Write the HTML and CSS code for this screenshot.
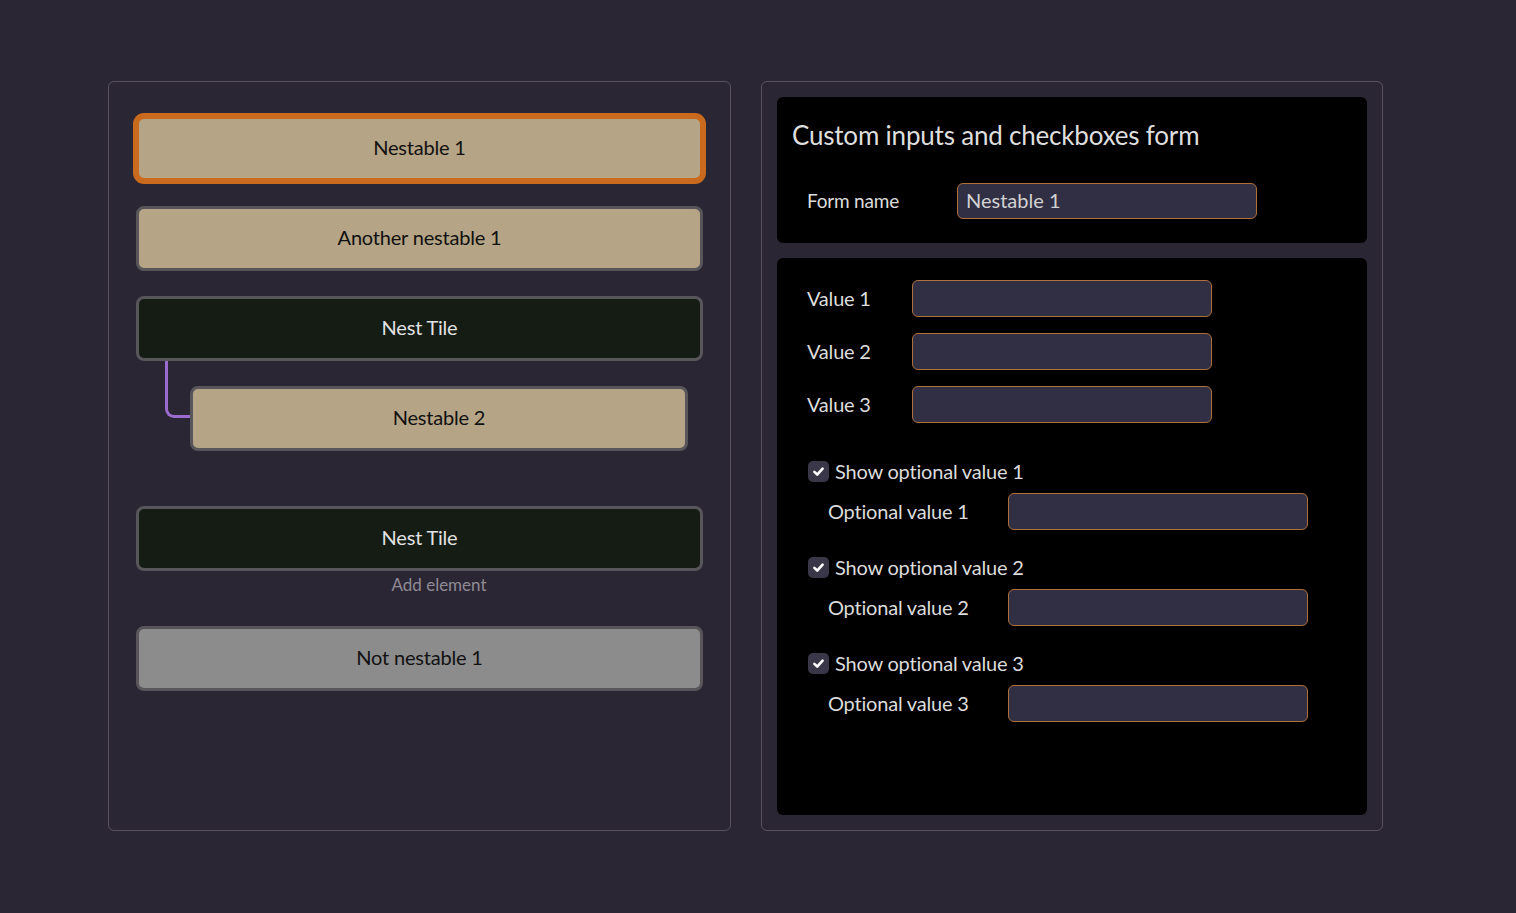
FILE: index.html
```html
<!DOCTYPE html>
<html lang="en">
<head>
<meta charset="utf-8">
<title>Nestable form</title>
<link rel="stylesheet" href="styles.css">
</head>
<body>
<main class="layout">
  <section class="panel list-panel">
    <div class="tile tan selected">Nestable 1</div>
    <div class="tile tan">Another nestable 1</div>
    <div class="nest">
      <div class="tile dark">Nest Tile</div>
      <div class="children">
        <div class="child">
          <span class="connector"></span>
          <div class="tile tan">Nestable 2</div>
        </div>
        <div class="add add-hidden">Add element</div>
      </div>
    </div>
    <div class="nest">
      <div class="tile dark">Nest Tile</div>
      <div class="children">
        <div class="add">Add element</div>
      </div>
    </div>
    <div class="tile grey">Not nestable 1</div>
  </section>

  <section class="panel form-panel">
    <div class="card head-card">
      <h1 class="title">Custom inputs and checkboxes form</h1>
      <div class="row name-row">
        <label class="lbl name-lbl">Form name</label>
        <div class="input">Nestable 1</div>
      </div>
    </div>
    <div class="card body-card">
      <div class="values">
        <div class="row"><label class="lbl val-lbl">Value 1</label><div class="input"></div></div>
        <div class="row"><label class="lbl val-lbl">Value 2</label><div class="input"></div></div>
        <div class="row"><label class="lbl val-lbl">Value 3</label><div class="input"></div></div>
      </div>
      <div class="opts">
        <div class="opt">
          <div class="check-row"><span class="box"><svg viewBox="0 0 12 12" width="13" height="13"><path d="M2.2 6.3 L4.8 8.8 L9.8 3.4" fill="none" stroke="#fff" stroke-width="2.4" stroke-linecap="round" stroke-linejoin="round"/></svg></span><span class="lbl">Show optional value 1</span></div>
          <div class="row opt-row"><label class="lbl opt-lbl">Optional value 1</label><div class="input"></div></div>
        </div>
        <div class="opt">
          <div class="check-row"><span class="box"><svg viewBox="0 0 12 12" width="13" height="13"><path d="M2.2 6.3 L4.8 8.8 L9.8 3.4" fill="none" stroke="#fff" stroke-width="2.4" stroke-linecap="round" stroke-linejoin="round"/></svg></span><span class="lbl">Show optional value 2</span></div>
          <div class="row opt-row"><label class="lbl opt-lbl">Optional value 2</label><div class="input"></div></div>
        </div>
        <div class="opt">
          <div class="check-row"><span class="box"><svg viewBox="0 0 12 12" width="13" height="13"><path d="M2.2 6.3 L4.8 8.8 L9.8 3.4" fill="none" stroke="#fff" stroke-width="2.4" stroke-linecap="round" stroke-linejoin="round"/></svg></span><span class="lbl">Show optional value 3</span></div>
          <div class="row opt-row"><label class="lbl opt-lbl">Optional value 3</label><div class="input"></div></div>
        </div>
      </div>
    </div>
  </section>
</main>
</body>
</html>
```

FILE: styles.css
```css
* { box-sizing: border-box; }
html, body { margin: 0; padding: 0; }
body {
  background: #2b2633;
  font-family: "Lato", "Liberation Sans", sans-serif;
  color: #dcdcdc;
  width: 1516px;
  height: 913px;
  overflow: hidden;
}
.layout {
  display: flex;
  gap: 30px;
  padding: 81px 0 0 108px;
}
.panel {
  width: 623px;
  height: 750px;
  border: 1px solid #57525e;
  border-radius: 6px;
}
.list-panel {
  padding: 34px 27px 0 27px;
  display: flex;
  flex-direction: column;
  gap: 25px;
}
.tile {
  height: 65px;
  border: 3px solid #58565a;
  border-radius: 8px;
  display: flex;
  align-items: center;
  justify-content: center;
  font-size: 20px;
  letter-spacing: -0.2px;
  padding-bottom: 3px;
}
.tan { background: #b5a485; color: #111; }
.dark { background: #141c13; color: #e2e2e2; }
.grey { background: #8c8c8c; color: #111; }
.selected {
  border-color: #c96a1e;
  box-shadow: 0 0 0 3px #c96a1e;
  border-radius: 8px;
}
.nest { display: flex; flex-direction: column; }
.children {
  display: flex;
  flex-direction: column;
  padding: 0 15px 0 54px;
}
.child {
  position: relative;
  padding-top: 25px;
}
.connector {
  position: absolute;
  left: -25px;
  top: 0;
  width: 25px;
  height: 57px;
  border-left: 3px solid #9b6ccd;
  border-bottom: 3px solid #9b6ccd;
  border-bottom-left-radius: 9px;
}
.add {
  height: 30px;
  display: flex;
  align-items: center;
  justify-content: center;
  font-size: 17px;
  color: #8f8b95;
  padding-bottom: 3px;
}
.add-hidden { visibility: hidden; }

.form-panel {
  width: 622px;
  padding: 15px;
  display: flex;
  flex-direction: column;
  gap: 15px;
}
.card {
  background: #000;
  border-radius: 6px;
}
.head-card {
  height: 146px;
  padding: 22px 15px 0 15px;
}
.title {
  margin: 0;
  font-weight: 400;
  font-size: 26px;
  line-height: 32px;
  color: #dedede;
  letter-spacing: -0.2px;
}
.row {
  display: flex;
  align-items: center;
}
.name-row { margin-top: 32px; padding-left: 15px; }
.lbl {
  font-size: 20px;
  color: #dcdcdc;
  letter-spacing: -0.2px;
  padding-bottom: 2px;
}
.name-lbl { width: 150px; font-size: 19px; }
.input {
  width: 300px;
  height: 37px;
  background: #312f44;
  border: 1px solid #b0703a;
  border-radius: 6px;
  padding: 0 8px 2px;
  display: flex;
  align-items: center;
  font-size: 20px;
  color: #d2d2d2;
}
.name-row .input { height: 36px; }
.body-card {
  flex: 1;
  padding: 22px 15px 0 30px;
}
.values {
  display: flex;
  flex-direction: column;
  gap: 16px;
}
.val-lbl { width: 105px; }
.opts {
  margin-top: 36px;
  display: flex;
  flex-direction: column;
  gap: 25px;
}
.opt { display: flex; flex-direction: column; gap: 9px; }
.check-row {
  display: flex;
  align-items: center;
  gap: 6px;
  height: 25px;
}
.box {
  width: 21px;
  height: 21px;
  background: #3a3749;
  border-radius: 5px;
  display: flex;
  align-items: center;
  justify-content: center;
  margin-left: 1px;
}
.opt-row { padding-left: 21px; }
.opt-lbl { width: 180px; }
```
